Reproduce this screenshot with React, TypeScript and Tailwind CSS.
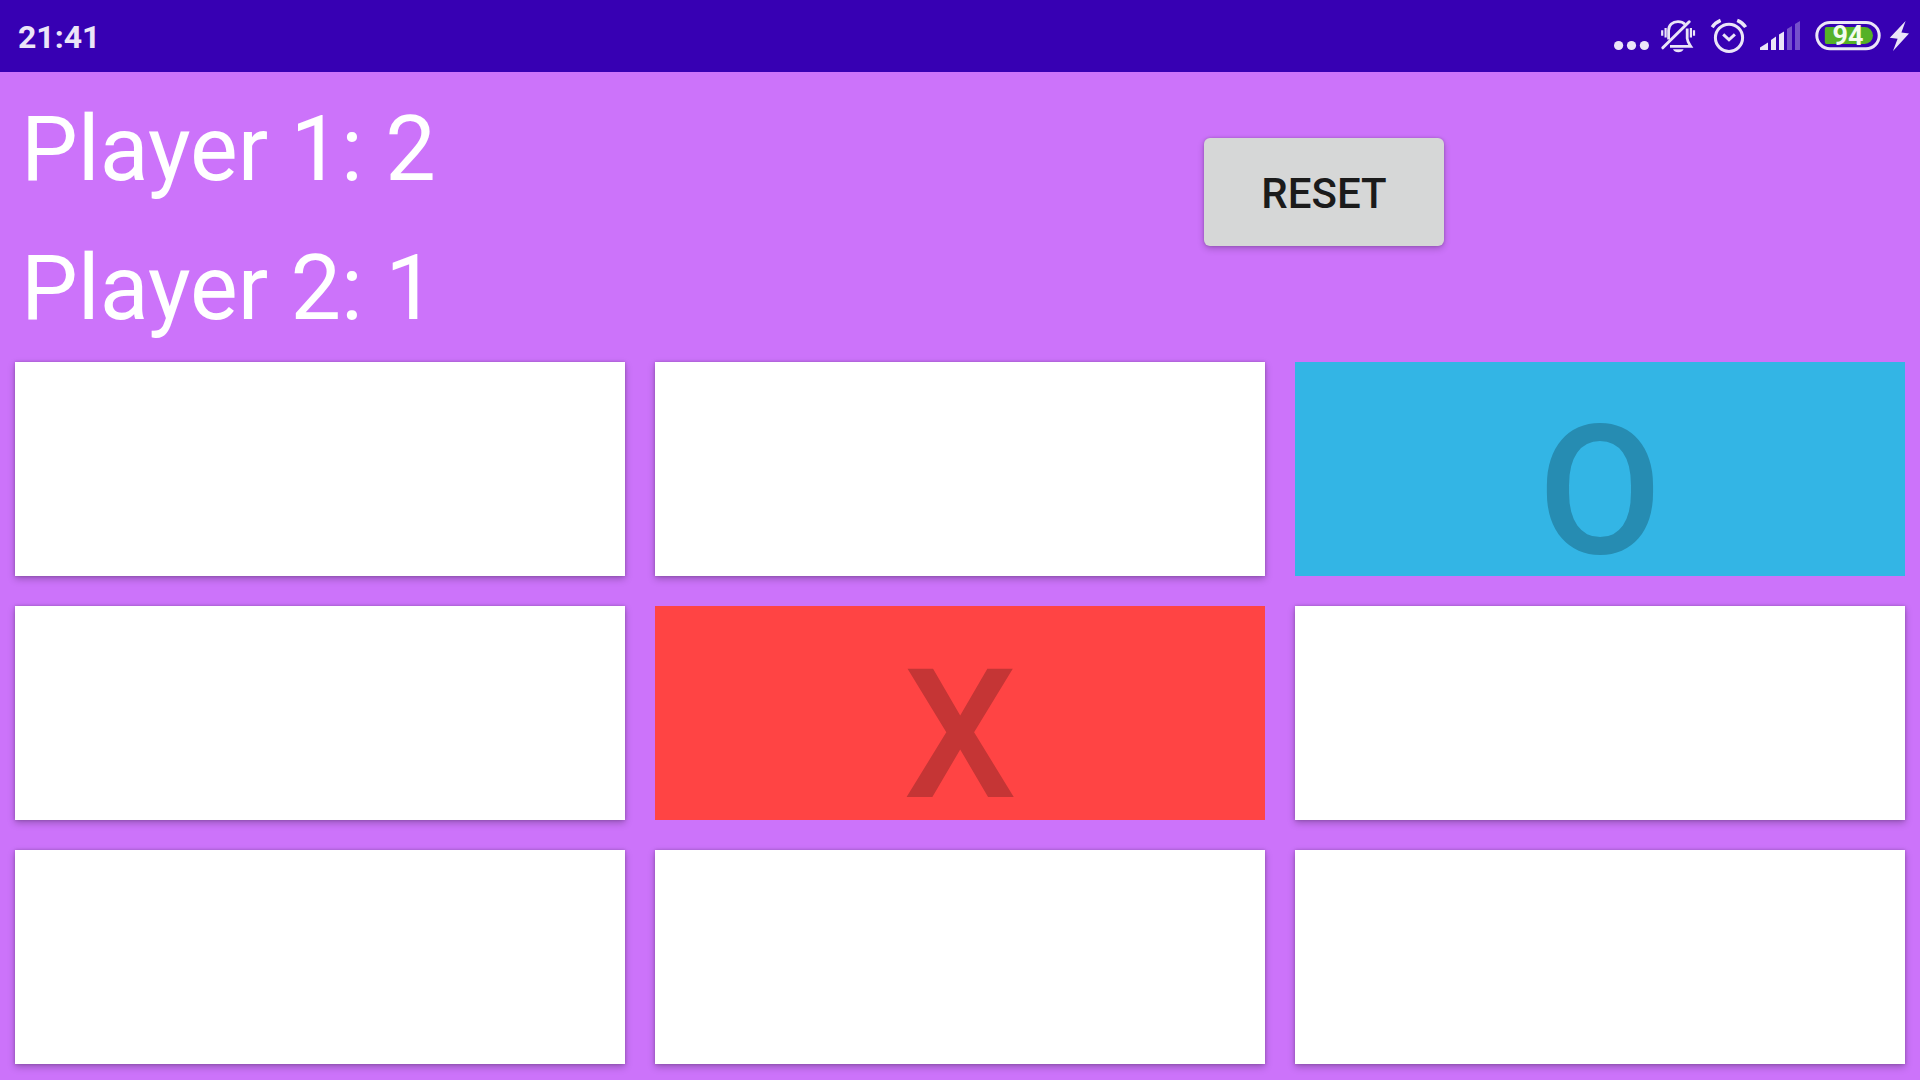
import { useState } from "react";

type Mark = "" | "X" | "O";

const START: Mark[] = ["", "", "O", "", "X", "", "", "", ""];

function DotsIcon() {
  return (
    <svg width="38" height="40" viewBox="0 0 38 40" fill="currentColor" aria-hidden="true">
      <circle cx="6.6" cy="29.5" r="4.6" />
      <circle cx="19.5" cy="29.5" r="4.6" />
      <circle cx="32.4" cy="29.5" r="4.6" />
    </svg>
  );
}

function MutedBellIcon() {
  return (
    <svg width="44" height="40" viewBox="0 0 44 40" fill="none" stroke="currentColor" strokeWidth="2.8" aria-hidden="true">
      <path d="M12.6 23.5V14.5C12.6 9 16.5 5.6 22 5.6C25 5.6 27.3 6.5 29 8.2" />
      <path d="M31.2 12.5V22.5C31.4 25.5 32.8 27.3 34.8 30.4H14" />
      <path d="M6.8 31.8L33.2 5.8" strokeWidth="3" strokeLinecap="round" />
      <path d="M17 33.2H27.6C26.8 35.2 24.8 36.2 22.3 36.2S17.8 35.2 17 33.2Z" fill="currentColor" stroke="none" />
      <path d="M6.2 14.2V19.8M38 14.2V19.8" strokeWidth="2.2" />
      <path d="M9.6 12V21.6M34.9 12V21.6" strokeWidth="2.2" />
    </svg>
  );
}

function AlarmIcon() {
  return (
    <svg width="44" height="40" viewBox="0 0 44 40" fill="none" stroke="currentColor" strokeWidth="3" aria-hidden="true">
      <circle cx="23" cy="21.8" r="13.6" />
      <path d="M17.2 18.4L23 23.8L28.9 18.4" />
      <path d="M6.2 11.2C8.2 8.2 10.8 6 14.6 4.4M31.2 4.4C34.8 5.8 37.6 8 39.6 11.2" strokeWidth="3.4" />
    </svg>
  );
}

function SignalIcon() {
  return (
    <svg width="52" height="40" viewBox="0 0 52 40" fill="currentColor" aria-hidden="true">
      <path d="M4 34V31.5L12 26.5V34Z" />
      <path d="M15 34V24L20 20.5V34Z" />
      <path d="M23 34V18.5L28 15.5V34Z" />
      <path d="M31 34V13L36 10V34Z" opacity="0.35" />
      <path d="M39 34V8L44 5V34Z" opacity="0.35" />
    </svg>
  );
}

function Battery({ level }: { level: number }) {
  return (
    <svg width="68" height="40" viewBox="0 0 68 40" role="img" aria-label={`Battery ${level}%`}>
      <rect x="2.8" y="6.4" width="62.4" height="26.4" rx="13.2" fill="none" stroke="#ebe5f8" strokeWidth="3" />
      <path d="M12.5 11H50.5A8.5 8.5 0 0 1 50.5 28H12.5Q10.8 28 10.8 26V13Q10.8 11 12.5 11Z" fill="#55b127" />
      <text x="34" y="29" textAnchor="middle" className="fill-[#f3fbef] font-['Roboto',sans-serif] text-[27px] font-bold">
        {level}
      </text>
    </svg>
  );
}

function BoltIcon() {
  return (
    <svg width="22" height="40" viewBox="0 0 22 40" fill="currentColor" aria-hidden="true">
      <path d="M17.6 5L13.4 16.6L21 17.6L5 35L9.6 22.8L1.8 21.8Z" />
    </svg>
  );
}

function StatusBar() {
  return (
    <header className="flex h-[72px] items-center justify-between bg-[#3700b3] pr-[10px] pl-[18px] text-[#ebe5f8]">
      <time className="pt-[2px] text-[32px] leading-9 font-bold">21:41</time>
      <div className="flex items-center gap-[6px]">
        <DotsIcon />
        <MutedBellIcon />
        <AlarmIcon />
        <SignalIcon />
        <Battery level={94} />
        <BoltIcon />
      </div>
    </header>
  );
}

function Cell({ mark, index, onPlay }: { mark: Mark; index: number; onPlay: () => void }) {
  const look =
    mark === "X"
      ? "bg-[#ff4444] text-[#c53535]"
      : mark === "O"
        ? "bg-[#33b5e5] text-[#268cb2]"
        : "bg-white shadow-[0_3px_7px_rgba(0,0,0,0.25),0_0_3px_rgba(0,0,0,0.2)]";
  return (
    <button
      type="button"
      disabled={mark !== ""}
      aria-label={`Cell ${index + 1}${mark ? `: ${mark}` : ""}`}
      onClick={onPlay}
      className={`flex items-center justify-center pt-[46px] text-[180px] leading-[168px] font-medium ${look}`}
    >
      {mark}
    </button>
  );
}

export default function App() {
  const [cells, setCells] = useState<Mark[]>(START);
  const [scores, setScores] = useState([2, 1]);

  const play = (index: number) =>
    setCells((prev) => {
      const next: Mark = prev.filter(Boolean).length % 2 === 0 ? "X" : "O";
      return prev.map((m, i) => (i === index ? next : m));
    });

  const reset = () => {
    setCells(START.map(() => ""));
    setScores([0, 0]);
  };

  return (
    <div className="flex min-h-screen flex-col bg-[#cc73fa] font-['Roboto',sans-serif]">
      <StatusBar />
      <main className="flex flex-1 flex-col">
        <section className="grid grid-cols-[728px_1fr] items-start pb-[21px]">
          <div className="flex flex-col gap-[34px] pt-[25px] pl-[21px] text-[90px] leading-[105px] text-white">
            <p>Player 1: {scores[0]}</p>
            <p>Player 2: {scores[1]}</p>
          </div>
          <button
            type="button"
            onClick={reset}
            className="mt-[66px] h-[108px] w-[240px] justify-self-center rounded-md bg-[#d6d7d7] pt-[2px] text-[42px] font-medium text-[#1b1b1b] shadow-[0_3px_7px_rgba(0,0,0,0.2),0_0_3px_rgba(0,0,0,0.2)]"
          >
            RESET
          </button>
        </section>
        <section className="grid flex-1 grid-cols-3 grid-rows-3 gap-[30px] px-[15px] pb-4">
          {cells.map((mark, i) => (
            <Cell key={i} mark={mark} index={i} onPlay={() => play(i)} />
          ))}
        </section>
      </main>
    </div>
  );
}
